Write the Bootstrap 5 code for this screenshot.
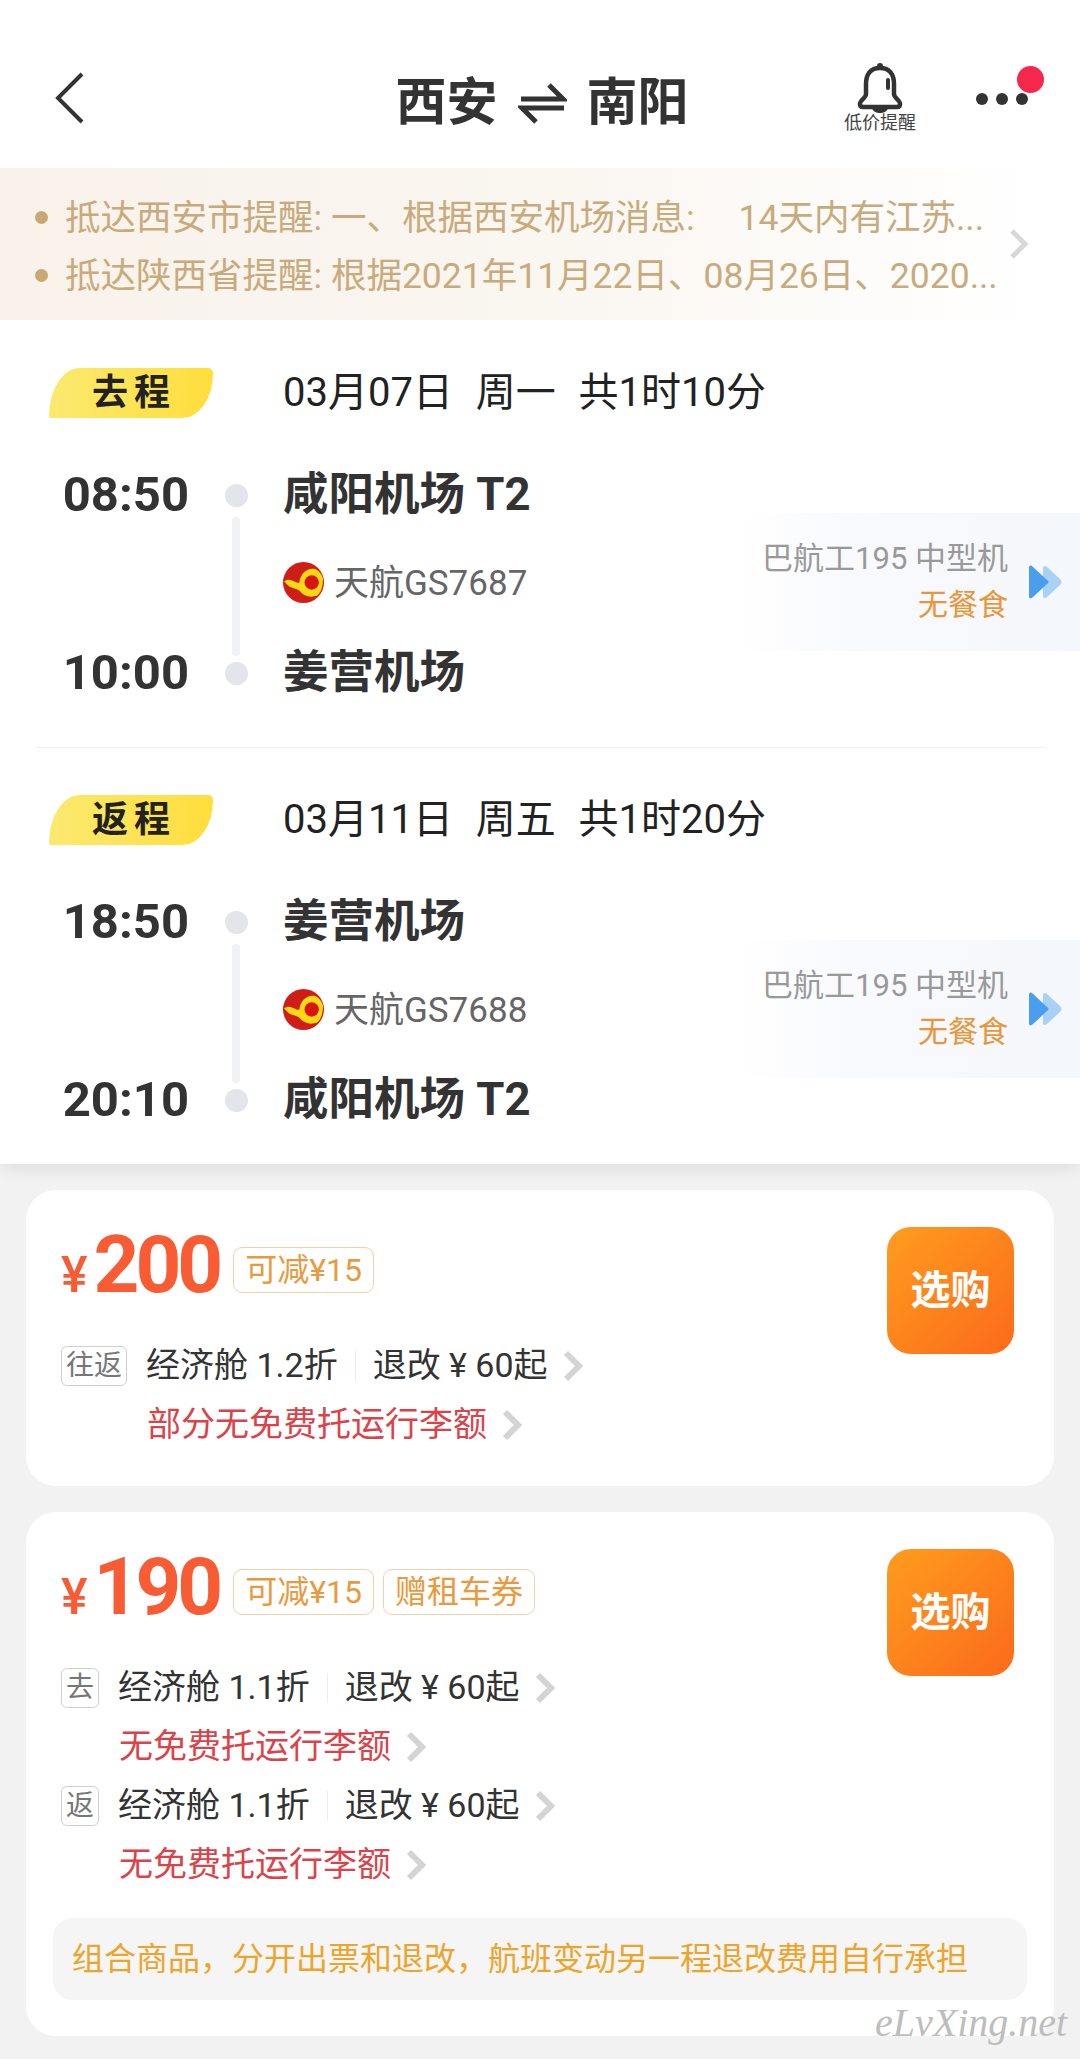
<!DOCTYPE html>
<html lang="zh-CN">
<head>
<meta charset="utf-8">
<title>西安 南阳</title>
<link rel="stylesheet" href="https://cdn.jsdelivr.net/npm/bootstrap@5.3.0/dist/css/bootstrap.min.css">
<style>
html,body{margin:0;background:#f2f2f2;}
body{width:1080px;height:2059px;overflow:hidden;font-family:Roboto,"Noto Sans CJK SC",sans-serif;color:#333;position:relative;}
.top-panel{background:#fff;box-shadow:0 4px 18px rgba(0,0,0,.09);padding-bottom:26px;}
.app-head{height:168px;padding:28px 51px 0 55px;display:grid;grid-template-columns:1fr auto 1fr;align-items:center;}
.app-title{font-size:51px;font-weight:700;line-height:60px;gap:20px;margin-top:10px;color:#333;}
.bell-box{width:72px;}
.bell-label{font-size:18px;line-height:20px;color:#444;white-space:nowrap;}
.more-box{margin-left:60px;width:53px;height:12px;gap:8px;margin-top:2px;}
.more-dot{width:12px;height:12px;border-radius:50%;background:#333;}
.red-dot{position:absolute;width:27px;height:27px;border-radius:50%;background:#f5284c;left:41px;top:-27px;}
.notice{height:152px;background:linear-gradient(90deg,#f8f2ea 0%,#faf6f0 50%,#fff 96%);padding-left:35px;padding-top:4px;position:relative;}
.notice-line{height:58px;font-size:35.500px;color:#c8ab7c;white-space:pre;gap:17px;}
.notice-text{padding-top:4px;}
.notice-dot{width:13px;height:13px;border-radius:50%;background:#c8a873;flex:none;}
.notice-arrow{position:absolute;left:1008px;top:60px;}
.seg{padding-top:48px;}
.seg+.seg{padding-top:47px;}
.seg-head{height:50px;margin-bottom:43px;}
.trip-tag{margin-left:49px;width:164px;height:50px;background:linear-gradient(90deg,#fbe96f,#ffde3c);border-radius:32px 5px 32px 2px / 50px 5px 46px 2px;font-size:36px;font-weight:700;letter-spacing:6px;text-indent:6px;color:#222;line-height:50px;text-align:center;}
.trip-date{margin-left:70px;font-size:40px;white-space:pre;color:#222;line-height:50px;word-spacing:1.500px;}
.seg-grid{display:grid;grid-template-columns:189px 94px 1fr;grid-template-rows:68px 110px 68px;align-items:center;}
.clock{grid-column:1;font-size:49px;font-weight:700;text-align:right;line-height:68px;color:#333;}
.node{grid-column:2;width:23px;height:23px;border-radius:50%;background:#e3e5ea;justify-self:center;}
.rail{grid-column:2;grid-row:2;width:8px;justify-self:center;align-self:stretch;margin:-12px 0 -17px;border-radius:4px;background:#f1f2f4;}
.port{grid-column:3;font-size:45.500px;font-weight:700;line-height:68px;color:#333;}
.row-a{grid-row:1;}
.row-c{grid-row:3;}
.flight{grid-column:3;grid-row:2;align-self:stretch;margin:-16px 0 -12px;}
.flight-no{font-size:35px;color:#666;gap:10px;}
.flight-no span{padding-top:5px;}
.plane-box{margin-left:auto;width:397px;background:linear-gradient(90deg,#fff 0%,#fff 14%,#f9fafd 40%,#f4f7fb 100%);padding-right:18px;gap:20px;}
.plane{font-size:31px;line-height:46px;color:#999;text-align:right;white-space:nowrap;}
.meal{font-size:30px;line-height:46px;color:#e8963c;text-align:right;}
.seg-rule{margin:40px 34px 0 35px;height:1px;background:#f0f0f0;}
.seg-last{padding-bottom:4px;}
.offer{margin:26px 26px 0;border-radius:30px;}
.offer-body{padding:47px 27px 32px;}
.offer-body.last-offer{padding-bottom:36px;}
.offer-top{padding:0 13px 0 8px;}
.price-row{height:56px;gap:12px;}
.price{font-weight:700;color:#f85c34;font-size:80px;letter-spacing:-4px;line-height:56px;white-space:nowrap;margin-bottom:-10px;}
.yen{font-size:50px;letter-spacing:0;margin-right:6px;font-weight:500;}
.perk{height:46px;border:1px solid #efd2a6;border-radius:9px;color:#e89a3f;font-size:32px;line-height:44px;padding:0 11px;white-space:nowrap;}
.perks{gap:9px;margin-left:2px;}
.buy{width:127px;height:127px;border-radius:24px;background:linear-gradient(135deg,#ff9d1e,#fb6a1b);color:#fff;font-size:40px;font-weight:700;margin-top:-10px;flex:none;border:0;padding:0;}
.fare-list{margin-top:43px;}
.fare{height:59px;font-size:34px;color:#333;white-space:nowrap;}
.cab-tag{height:40px;border:1px solid #cfcfcf;border-radius:6px;color:#777;font-size:28px;line-height:38px;padding:0 4px;margin-right:19px;}
.fare-sep{width:1px;height:30px;background:#ececec;margin:0 17px;}
.fare-red{color:#d9434a;font-size:34px;}
.chev{margin-left:15px;flex:none;}
.indent-two{padding-left:86px;}
.indent-one{padding-left:58px;}
.tip{margin-top:24px;height:82px;border-radius:20px;background:#f5f5f5;color:#eba52d;font-size:32px;padding-left:19px;white-space:nowrap;}
.mark-sign{position:absolute;left:875px;top:2000px;font-family:"Liberation Serif",serif;font-style:italic;font-size:40px;color:#bdbdbd;white-space:nowrap;letter-spacing:0;line-height:46px;}
</style>
</head>
<body>
<div class="top-panel">
  <header class="app-head">
    <div>
      <svg width="30" height="52" viewBox="0 0 30 52"><polyline points="27,2 3,26 27,50" fill="none" stroke="#333" stroke-width="4"/></svg>
    </div>
    <div class="app-title d-flex align-items-center">
      <span>西安</span>
      <svg width="49" height="42" viewBox="0 0 49 42"><path d="M3 17H45L31 3M46 26H4L18 40" fill="none" stroke="#333" stroke-width="5"/></svg>
      <span>南阳</span>
    </div>
    <div class="d-flex justify-content-end align-items-center">
      <div class="bell-box d-flex flex-column align-items-center">
        <svg width="46" height="50" viewBox="0 0 46 50"><path d="M23 5C13 5 9 12 9 21V31C9 35 3 37 3 41C3 43 4 44 6 44H40C42 44 43 43 43 41C43 37 37 35 37 31V21C37 12 33 5 23 5Z" fill="none" stroke="#333" stroke-width="4.500" stroke-linejoin="round"/><circle cx="23" cy="3" r="3" fill="#333"/><path d="M15 45H31C30 49 26 50 23 50C20 50 16 49 15 45Z" fill="#333"/><rect x="29" y="15" width="4" height="12" rx="2" fill="#333"/></svg>
        <div class="bell-label">低价提醒</div>
      </div>
      <div class="more-box d-flex position-relative">
        <span class="more-dot"></span><span class="more-dot"></span><span class="more-dot"></span>
        <span class="red-dot"></span>
      </div>
    </div>
  </header>
  <section class="notice d-flex flex-column justify-content-center">
    <div class="notice-line d-flex align-items-center"><span class="notice-dot"></span><span class="notice-text">抵达西安市提醒: 一、根据西安机场消息:     14天内有江苏...</span></div>
    <div class="notice-line d-flex align-items-center"><span class="notice-dot"></span><span class="notice-text">抵达陕西省提醒: 根据2021年11月22日、08月26日、2020...</span></div>
    <svg class="notice-arrow" width="22" height="32" viewBox="0 0 22 32"><polyline points="4,3 17,16 4,29" fill="none" stroke="#d8d8d8" stroke-width="5"/></svg>
  </section>

  <section class="seg">
    <div class="seg-head d-flex align-items-center"><div class="trip-tag">去程</div><div class="trip-date">03月07日  周一  共1时10分</div></div>
    <div class="seg-grid">
      <div class="clock row-a">08:50</div><span class="node row-a"></span><div class="port row-a">咸阳机场 T2</div>
      <span class="rail"></span>
      <div class="flight d-flex align-items-center">
        <div class="flight-no d-flex align-items-center">
          <svg width="41" height="41" viewBox="0 0 40 40"><circle cx="20" cy="20" r="20" fill="#cf1d18"/><path d="M1 19C7 14 13 22 16 20C17 11 24 5 32 7C36 9 38 13 39 16C39 24 37 30 33 33C26 35 20 33 17 29C14 26 10 26 6 24Z" fill="#fcd815"/><circle cx="28" cy="20" r="7" fill="#d8150f"/></svg>
          <span>天航GS7687</span>
        </div>
        <div class="plane-box d-flex align-items-center justify-content-end align-self-stretch">
          <div><div class="plane">巴航工195 中型机</div><div class="meal">无餐食</div></div>
          <svg width="34" height="34" viewBox="0 0 34 34"><path d="M15 3C15 1 17 0 19 2L32 14C34 16 34 18 32 20L19 32C17 34 15 33 15 31Z" fill="#a9d1f6"/><path d="M1 3C1 0 3 0 5 2L19 15C21 16 21 18 19 19L5 32C3 34 1 34 1 31Z" fill="#4b9ded"/></svg>
        </div>
      </div>
      <div class="clock row-c">10:00</div><span class="node row-c"></span><div class="port row-c">姜营机场</div>
    </div>
    <div class="seg-rule"></div>
  </section>

  <section class="seg seg-last">
    <div class="seg-head d-flex align-items-center"><div class="trip-tag">返程</div><div class="trip-date">03月11日  周五  共1时20分</div></div>
    <div class="seg-grid">
      <div class="clock row-a">18:50</div><span class="node row-a"></span><div class="port row-a">姜营机场</div>
      <span class="rail"></span>
      <div class="flight d-flex align-items-center">
        <div class="flight-no d-flex align-items-center">
          <svg width="41" height="41" viewBox="0 0 40 40"><circle cx="20" cy="20" r="20" fill="#cf1d18"/><path d="M1 19C7 14 13 22 16 20C17 11 24 5 32 7C36 9 38 13 39 16C39 24 37 30 33 33C26 35 20 33 17 29C14 26 10 26 6 24Z" fill="#fcd815"/><circle cx="28" cy="20" r="7" fill="#d8150f"/></svg>
          <span>天航GS7688</span>
        </div>
        <div class="plane-box d-flex align-items-center justify-content-end align-self-stretch">
          <div><div class="plane">巴航工195 中型机</div><div class="meal">无餐食</div></div>
          <svg width="34" height="34" viewBox="0 0 34 34"><path d="M15 3C15 1 17 0 19 2L32 14C34 16 34 18 32 20L19 32C17 34 15 33 15 31Z" fill="#a9d1f6"/><path d="M1 3C1 0 3 0 5 2L19 15C21 16 21 18 19 19L5 32C3 34 1 34 1 31Z" fill="#4b9ded"/></svg>
        </div>
      </div>
      <div class="clock row-c">20:10</div><span class="node row-c"></span><div class="port row-c">咸阳机场 T2</div>
    </div>
  </section>
</div>

<div class="card border-0 offer">
  <div class="offer-body">
    <div class="offer-top d-flex justify-content-between align-items-start">
      <div>
        <div class="price-row d-flex align-items-end">
          <div class="price"><span class="yen">¥</span>200</div>
          <div class="perks d-flex"><span class="perk">可减¥15</span></div>
        </div>
        <div class="fare-list">
          <div class="fare d-flex align-items-center"><span class="cab-tag">往返</span><span>经济舱 1.2折</span><span class="fare-sep"></span><span>退改 ¥ 60起</span><svg class="chev" width="20" height="32" viewBox="0 0 20 32"><polyline points="3,3 16,16 3,29" fill="none" stroke="#d4d4d4" stroke-width="6"/></svg></div>
          <div class="fare d-flex align-items-center indent-two"><span class="fare-red">部分无免费托运行李额</span><svg class="chev" width="20" height="32" viewBox="0 0 20 32"><polyline points="3,3 16,16 3,29" fill="none" stroke="#d4d4d4" stroke-width="6"/></svg></div>
        </div>
      </div>
      <button class="buy" type="button">选购</button>
    </div>
  </div>
</div>

<div class="card border-0 offer">
  <div class="offer-body last-offer">
    <div class="offer-top d-flex justify-content-between align-items-start">
      <div>
        <div class="price-row d-flex align-items-end">
          <div class="price"><span class="yen">¥</span>190</div>
          <div class="perks d-flex"><span class="perk">可减¥15</span><span class="perk">赠租车券</span></div>
        </div>
        <div class="fare-list">
          <div class="fare d-flex align-items-center"><span class="cab-tag">去</span><span>经济舱 1.1折</span><span class="fare-sep"></span><span>退改 ¥ 60起</span><svg class="chev" width="20" height="32" viewBox="0 0 20 32"><polyline points="3,3 16,16 3,29" fill="none" stroke="#d4d4d4" stroke-width="6"/></svg></div>
          <div class="fare d-flex align-items-center indent-one"><span class="fare-red">无免费托运行李额</span><svg class="chev" width="20" height="32" viewBox="0 0 20 32"><polyline points="3,3 16,16 3,29" fill="none" stroke="#d4d4d4" stroke-width="6"/></svg></div>
          <div class="fare d-flex align-items-center"><span class="cab-tag">返</span><span>经济舱 1.1折</span><span class="fare-sep"></span><span>退改 ¥ 60起</span><svg class="chev" width="20" height="32" viewBox="0 0 20 32"><polyline points="3,3 16,16 3,29" fill="none" stroke="#d4d4d4" stroke-width="6"/></svg></div>
          <div class="fare d-flex align-items-center indent-one"><span class="fare-red">无免费托运行李额</span><svg class="chev" width="20" height="32" viewBox="0 0 20 32"><polyline points="3,3 16,16 3,29" fill="none" stroke="#d4d4d4" stroke-width="6"/></svg></div>
        </div>
      </div>
      <button class="buy" type="button">选购</button>
    </div>
    <div class="tip d-flex align-items-center">组合商品，分开出票和退改，航班变动另一程退改费用自行承担</div>
  </div>
</div>
<div class="mark-sign">eLvXing.net</div>
<script src="https://cdn.jsdelivr.net/npm/bootstrap@5.3.0/dist/js/bootstrap.bundle.min.js"></script>
</body>
</html>
